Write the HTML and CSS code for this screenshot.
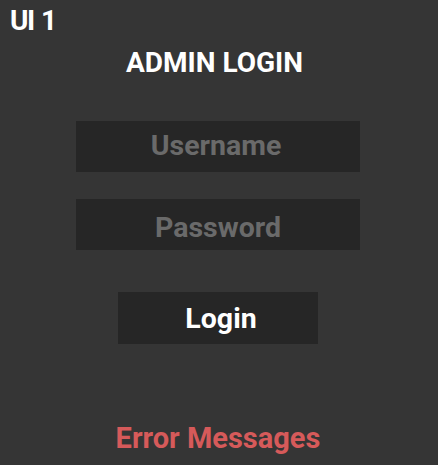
FILE: index.html
```html
<!DOCTYPE html>
<html lang="en">
<head>
<meta charset="utf-8">
<title>UI 1 - Admin Login</title>
<link rel="stylesheet" href="styles.css">
</head>
<body>
<div class="screen">
  <div class="tag">UI 1</div>
  <main class="panel">
    <h1 class="title">ADMIN LOGIN</h1>
    <form class="form">
      <input class="field field-user" type="text" placeholder="Username">
      <input class="field field-pass" type="password" placeholder="Password">
      <button class="login" type="button">Login</button>
    </form>
    <p class="error">Error Messages</p>
  </main>
</div>
</body>
</html>
```
FILE: styles.css
```css
html, body {
  margin: 0;
  padding: 0;
  background: #353535;
}
.screen {
  width: 438px;
  height: 465px;
  background: #353535;
  font-family: Roboto, "Liberation Sans", sans-serif;
  font-weight: 700;
  color: #ffffff;
  overflow: hidden;
}
.tag {
  padding: 5px 0 0 10px;
  font-size: 28px;
  line-height: 32px;
  letter-spacing: -1.5px;
  word-spacing: 2px;
}
.panel {
  width: 436px;
  display: flex;
  flex-direction: column;
  align-items: center;
}
.title {
  margin: 10px 0 0;
  padding-right: 7px;
  font-size: 28px;
  line-height: 32px;
  font-weight: 700;
}
.form {
  display: flex;
  flex-direction: column;
  align-items: center;
  margin: 42px 0 0;
}
.field {
  box-sizing: border-box;
  width: 284px;
  height: 51px;
  border: none;
  outline: none;
  padding: 0;
  margin: 0;
  background: #262626;
  color: #ffffff;
  font-family: inherit;
  font-weight: 700;
  font-size: 28.5px;
  text-align: center;
}
.field::placeholder {
  color: #6a6a6a;
  opacity: 1;
}
.field-user {
  padding: 0 4px 3px 0;
}
.field-pass {
  margin-top: 27px;
  padding: 5px 0 0 0;
}
.login {
  box-sizing: border-box;
  width: 200px;
  height: 52px;
  margin-top: 42px;
  border: none;
  padding: 0 0 0 6px;
  background: #262626;
  color: #ffffff;
  font-family: inherit;
  font-weight: 700;
  font-size: 28.5px;
  cursor: pointer;
}
.error {
  margin: 78px 0 0;
  font-size: 29px;
  line-height: 32px;
  color: #d65a5a;
}
```
